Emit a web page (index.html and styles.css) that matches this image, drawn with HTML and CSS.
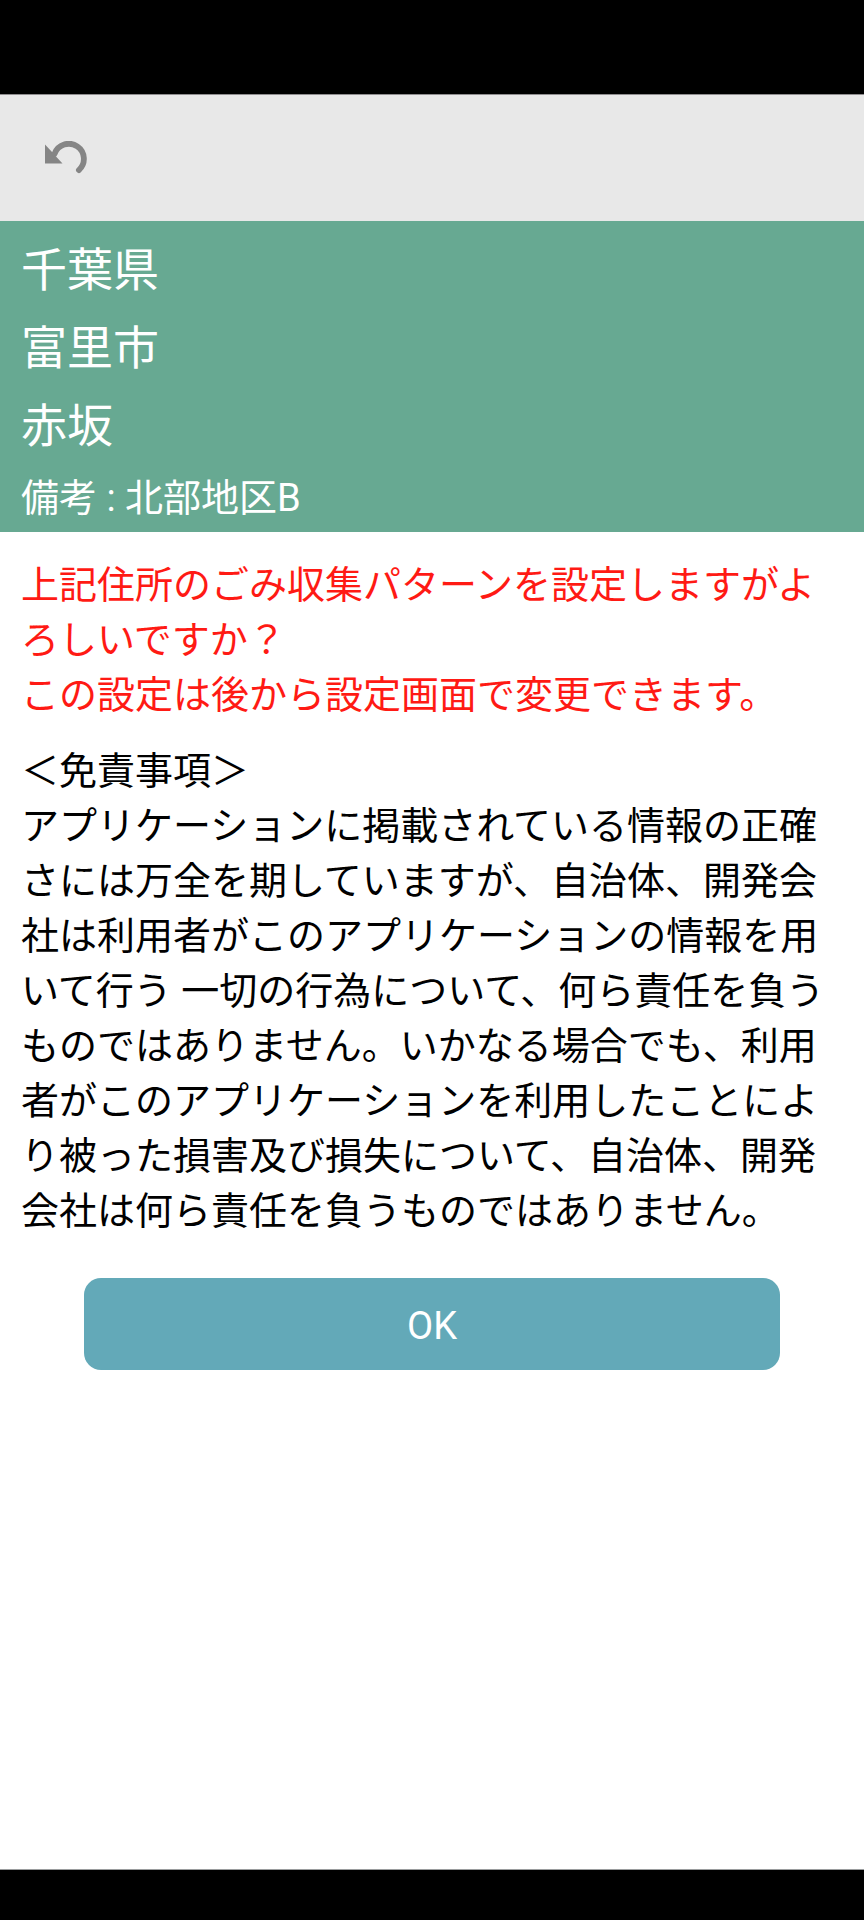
FILE: index.html
```html
<!DOCTYPE html>
<html lang="ja">
<head>
<meta charset="utf-8">
<meta name="viewport" content="width=device-width, initial-scale=1">
<title>地区の確認</title>
<link rel="stylesheet" href="styles.css">
</head>
<body>
<div class="screen">
  <div class="system-bar system-bar-top"></div>
  <nav class="toolbar">
    <button class="back" type="button" aria-label="戻る">
      <svg class="back-icon" viewBox="0 0 42 33" aria-hidden="true">
        <path d="M0 3.500V22.500H17.500L11 15.500L7.500 11.500Z" fill="#858585"/>
        <path d="M9.600 12.700A15.100 15.100 0 1 1 33.900 29.100" fill="none" stroke="#858585" stroke-width="5.800" stroke-linecap="round"/>
      </svg>
    </button>
  </nav>
  <header class="address">
    <p class="place">千葉県</p>
    <p class="place">富里市</p>
    <p class="place">赤坂</p>
    <p class="note">備考 : 北部地区B</p>
  </header>
  <main class="content">
    <p class="question">上記住所のごみ収集パターンを設定しますがよろしいですか？<br>この設定は後から設定画面で変更できます。</p>
    <p class="terms">＜免責事項＞<br>アプリケーションに掲載されている情報の正確さには万全を期していますが、自治体、開発会社は利用者がこのアプリケーションの情報を用いて行う 一切の行為について、何ら責任を負うものではありません。いかなる場合でも、利用者がこのアプリケーションを利用したことにより被った損害及び損失について、自治体、開発会社は何ら責任を負うものではありません。</p>
    <button class="ok" type="button">OK</button>
  </main>
  <div class="system-bar system-bar-bottom"></div>
</div>
</body>
</html>
```
FILE: styles.css
```css
* {
  box-sizing: border-box;
}

body {
  margin: 0;
  background: #fff;
  color: #000;
  font-family: Roboto, "Noto Sans CJK JP", sans-serif;
  font-size: 38px;
  line-height: 55px;
}

p {
  margin: 0;
}

button {
  border: 0;
  padding: 0;
  font: inherit;
  cursor: pointer;
}

.screen {
  display: flex;
  flex-direction: column;
  min-height: 100vh;
}

.system-bar {
  background: #000;
}

.system-bar-top {
  height: 95px;
  border-bottom: 1px solid #8f8d8f;
}

.system-bar-bottom {
  height: 51px;
  border-top: 1px solid #999c9d;
}

.toolbar {
  display: flex;
  align-items: center;
  height: 126px;
  padding: 0 22px 2px;
  background: #e8e8e8;
}

.back {
  display: flex;
  align-items: center;
  justify-content: center;
  width: 88px;
  height: 88px;
  background: transparent;
}

.back-icon {
  width: 42px;
  height: 33px;
}

.address {
  padding: 10px 21px 0;
  background: #67a992;
  color: #fff;
}

.place {
  font-size: 46px;
  line-height: 78px;
}

.note {
  line-height: 67px;
}

.content {
  flex: 1;
  display: flex;
  flex-direction: column;
  gap: 21px;
  padding: 26px 21px;
}

.question {
  color: #ff1a14;
}

.question,
.terms {
  line-break: loose;
}

.ok {
  height: 92px;
  margin: 18px 63px 0;
  padding-top: 4px;
  border-radius: 17px;
  background: #63a9b8;
  color: #fff;
}
```
